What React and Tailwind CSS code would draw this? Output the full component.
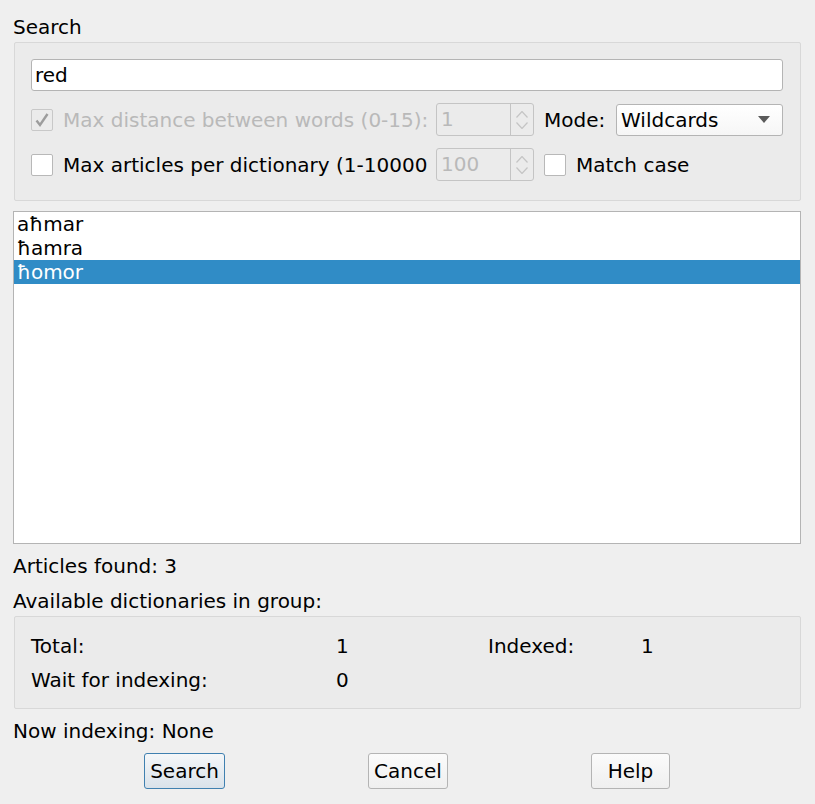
const FONT = { fontFamily: '"DejaVu Sans", "Noto Sans", sans-serif' };

const WORDS = ["aħmar", "ħamra", "ħomor"];

const Check = ({ checked, disabled }) => (
  <div
    className={
      "w-[22px] h-[22px] shrink-0 rounded-[2px] border flex items-center justify-center " +
      (disabled ? "bg-[#ebebeb] border-[#c8c8c8]" : "bg-white border-[#b8b8b8]")
    }
  >
    {checked && (
      <svg width="16" height="16" viewBox="0 0 16 16">
        <path d="M2.5 8.5 L6 13 L13.5 2" fill="none" stroke="#9c9c9c" strokeWidth="2.4" />
      </svg>
    )}
  </div>
);

const Spin = ({ value }) => (
  <div className="w-[98px] h-[33px] shrink-0 flex rounded-[3px] border border-[#c4c4c4] bg-[#ebebeb]">
    <div className="flex-1 pl-[4px] leading-[31px] text-[#b9b9b9]">{value}</div>
    <div className="w-[23px] border-l border-[#c4c4c4] flex flex-col items-center justify-center gap-[4px]">
      <svg width="12" height="7" viewBox="0 0 12 7">
        <path d="M0.5 6.5 L6 0.5 L11.5 6.5" fill="none" stroke="#c4c4c4" strokeWidth="1.2" />
      </svg>
      <svg width="12" height="7" viewBox="0 0 12 7">
        <path d="M0.5 0.5 L6 6.5 L11.5 0.5" fill="none" stroke="#c4c4c4" strokeWidth="1.2" />
      </svg>
    </div>
  </div>
);

const Button = ({ label, primary, width }) => (
  <div
    className={
      "h-[36px] flex items-center justify-center rounded-[3px] border text-black " +
      width +
      " " +
      (primary
        ? "border-[#3f80b0] bg-gradient-to-b from-[#f5f7f9] to-[#d9e2ea]"
        : "border-[#b4b4b4] bg-gradient-to-b from-[#fbfbfb] to-[#efefef]")
    }
  >
    {label}
  </div>
);

export default function App() {
  return (
    <div
      className="w-[815px] h-[804px] bg-[#efefef] text-[20px] text-black pl-[13px] pr-[14px] pt-[15px] flex flex-col"
      style={FONT}
    >
      <div className="h-[24px] leading-[25px]">Search</div>

      <div className="mt-[3px] ml-px h-[159px] border border-[#d8d8d8] rounded-[2px] bg-[#ebebeb] pl-[16px] pr-[17px] pt-[16px] flex flex-col">
        <div className="h-[32px] rounded-[3px] border border-[#b4b4b4] bg-white pl-[3px] leading-[31px]">red</div>

        <div className="mt-[12px] h-[33px] flex items-center">
          <Check checked disabled />
          <div className="ml-[10px] w-[373px] shrink-0 whitespace-nowrap overflow-hidden text-[#b9b9b9]">
            Max distance between words (0-15):
          </div>
          <Spin value="1" />
          <div className="ml-[10px] w-[72px] shrink-0">Mode:</div>
          <div className="w-[167px] h-[32px] rounded-[3px] border border-[#b4b4b4] bg-gradient-to-b from-white to-[#f6f6f6] flex items-center justify-between pl-[4px] pr-[12px]">
            <span>Wildcards</span>
            <svg width="12" height="7" viewBox="0 0 12 7">
              <path d="M0 0 L12 0 L6 7 Z" fill="#5a5a5a" />
            </svg>
          </div>
        </div>

        <div className="mt-[12px] h-[33px] flex items-center">
          <Check />
          <div className="ml-[10px] w-[365px] mr-[8px] shrink-0 whitespace-nowrap overflow-hidden">
            Max articles per dictionary (1-10000):
          </div>
          <Spin value="100" />
          <div className="ml-[10px]">
            <Check />
          </div>
          <div className="ml-[10px]">Match case</div>
        </div>
      </div>

      <div className="mt-[10px] h-[333px] border border-[#b4b4b4] bg-white">
        {WORDS.map((w, i) => (
          <div
            key={w}
            className={
              "h-[24px] leading-[25px] pl-[3px] " + (i === 2 ? "bg-[#308cc6] text-white" : "")
            }
          >
            {w}
          </div>
        ))}
      </div>

      <div className="mt-[10px] h-[24px] leading-[25px]">Articles found: 3</div>
      <div className="mt-[11px] h-[24px] leading-[25px]">Available dictionaries in group:</div>

      <div className="mt-[3px] ml-px h-[93px] border border-[#d8d8d8] rounded-[2px] bg-[#ebebeb] pl-[16px] pt-[17px] grid grid-cols-[305px_152px_153px_1fr] auto-rows-[34px]">
        <div className="leading-[25px]">Total:</div>
        <div className="leading-[25px]">1</div>
        <div className="leading-[25px]">Indexed:</div>
        <div className="leading-[25px]">1</div>
        <div className="leading-[25px]">Wait for indexing:</div>
        <div className="leading-[25px]">0</div>
      </div>

      <div className="mt-[10px] h-[24px] leading-[25px]">Now indexing: None</div>

      <div className="mt-[10px] flex justify-center gap-[143px]">
        <Button label="Search" primary width="w-[81px]" />
        <Button label="Cancel" width="w-[80px]" />
        <Button label="Help" width="w-[79px]" />
      </div>
    </div>
  );
}
